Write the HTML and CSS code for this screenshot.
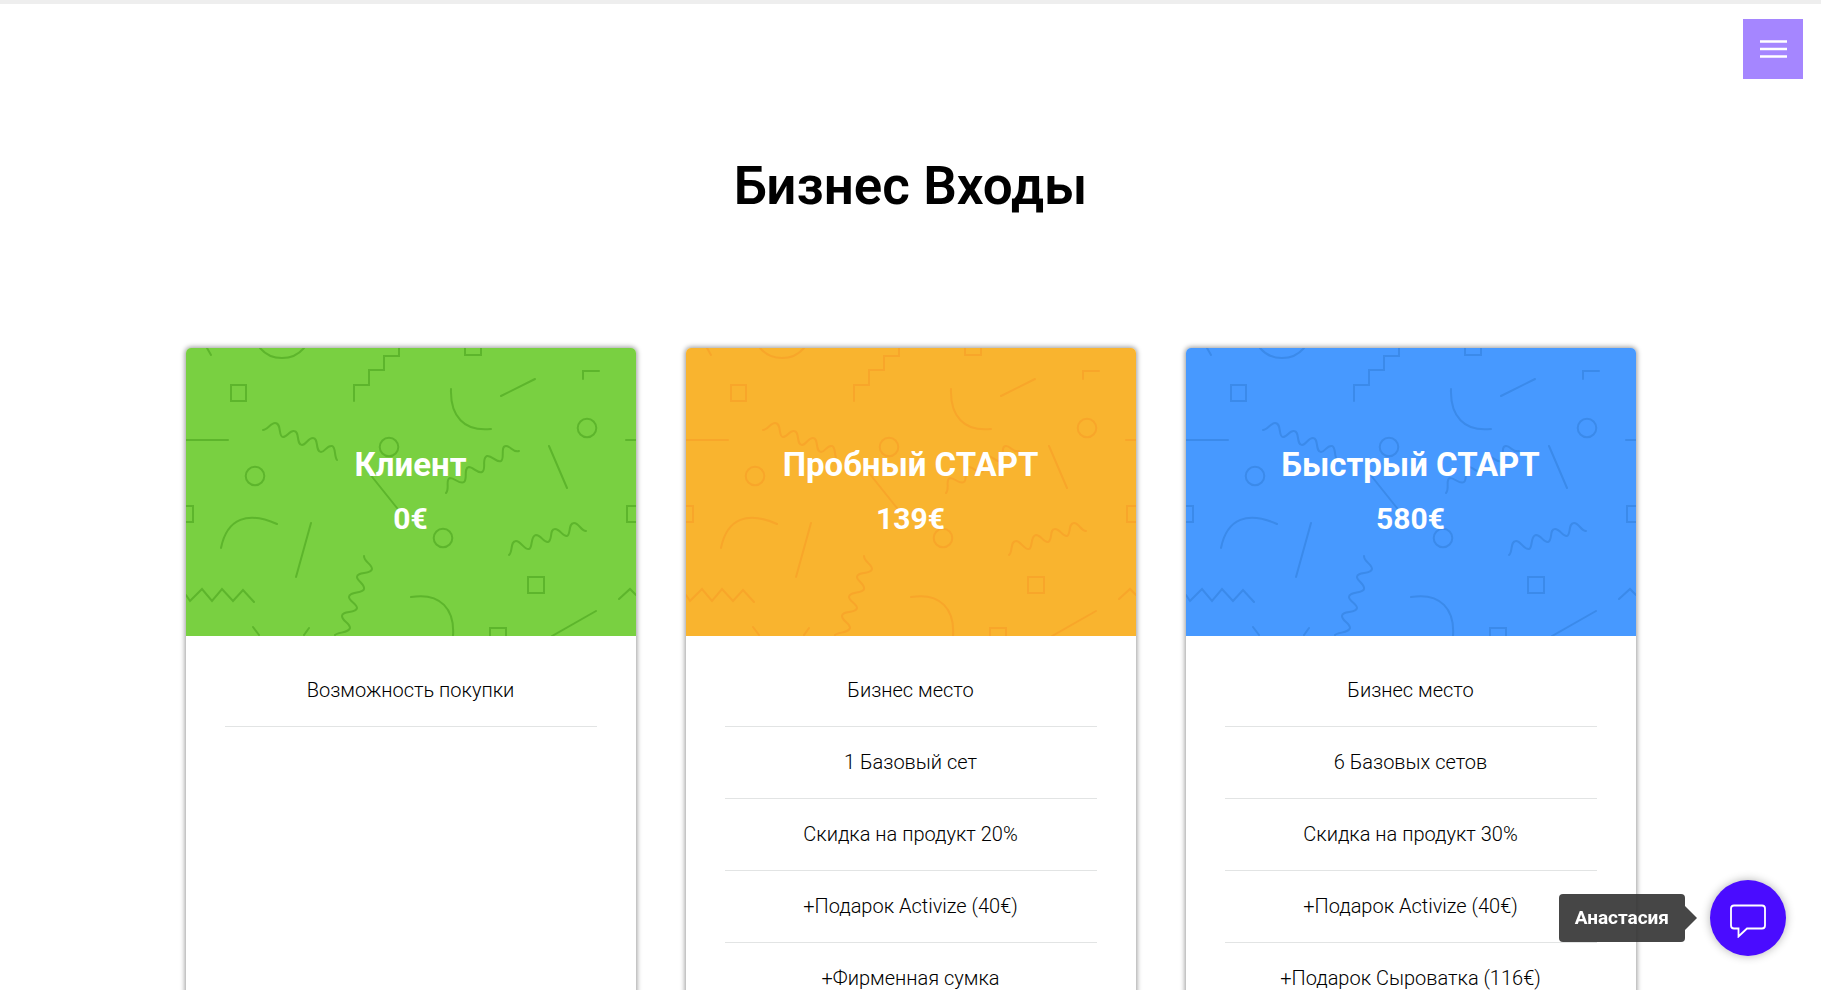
FILE: index.html
```html
<!DOCTYPE html>
<html lang="ru">
<head>
<meta charset="utf-8">
<meta name="viewport" content="width=device-width, initial-scale=1">
<title>Бизнес Входы</title>
<link rel="stylesheet" href="styles.css">
</head>
<body>
<svg class="defs" aria-hidden="true">
  <symbol id="confetti" viewBox="0 0 450 288" preserveAspectRatio="xMidYMid slice">
    <g fill="none" stroke="currentColor" stroke-width="2" stroke-linecap="round">
      <path d="M21 0L25 7M74 0A29 29 0 0 0 118 0M168 53V37H183V22H198V8H213V0M0 92H42M183 125L211 160"/>
      <path d="M45 37h15v16h-15zM-8 158H7v16H-8zM279-8h16V7h-16zM441 158h16v16h-16zM342 229h16v16h-16zM304 280h16v16h-16z"/>
      <path d="M77 82C81 82 85 75 89 75C96 75 92 89 97 89C101 89 104 82 108 83C114 83 110 97 116 97C120 97 122 90 127 90C133 90 129 104 135 104C139 104 141 97 146 98C150 99 148 108 151 112"/>
      <circle cx="69" cy="128" r="9.3"/><circle cx="203" cy="99" r="9.3"/><circle cx="401" cy="80" r="9.3"/><circle cx="257" cy="190" r="9.3"/>
      <path d="M35 200C41 170 62 163 91 176M125 175L110 229M0 247L4 253L16 241L26 253L36 241L47 253L57 242L68 254M67 279L73 287M123 280L118 287"/>
      <path d="M178 208C178 214 186 216 186 221C185 227 171 223 171 229C171 233 179 236 178 241C177 246 163 243 163 249C163 253 171 256 171 260C170 266 156 262 156 268C156 273 164 275 164 280C163 285 152 284 149 287"/>
      <path d="M315 48L349 31M265 41C264 68 278 84 305 81M397 31V23H413M440 92H450M363 98L381 140"/>
      <path d="M260 145C264 141 259 131 264 130C269 130 274 137 278 134C282 131 277 120 283 119C287 119 292 126 296 124C301 122 295 110 301 108C306 107 310 115 315 113C319 111 314 98 320 98C325 98 327 105 333 103"/>
      <path d="M323 207C327 204 324 193 330 193C335 193 338 202 343 201C347 200 344 188 350 187C355 187 358 195 362 194C367 192 363 181 369 181C374 181 377 189 381 188C385 187 382 175 388 175C393 175 395 183 400 183"/>
      <path d="M225 249C255 244 269 262 267 288M366 288L410 263M433 251L444 241L450 247"/>
    </g>
  </symbol>
</svg>

<header class="topbar">
  <button class="menu" type="button" aria-label="Меню">
    <svg class="menu-icon" viewBox="0 0 27 18" aria-hidden="true">
      <path d="M0 1.500H27M0 9H27M0 16.500H27" fill="none" stroke="#fff" stroke-width="2.600"/>
    </svg>
  </button>
</header>

<main class="page">
  <h1 class="page-title">Бизнес Входы</h1>
  <div class="plans">
    <article class="plan">
      <div class="plan-head plan-head-green">
        <svg class="pattern" aria-hidden="true"><use href="#confetti"/></svg>
        <h2 class="plan-name">Клиент</h2>
        <p class="plan-price">0€</p>
      </div>
      <ul class="features">
        <li class="feature">Возможность покупки</li>
      </ul>
    </article>
    <article class="plan">
      <div class="plan-head plan-head-orange">
        <svg class="pattern" aria-hidden="true"><use href="#confetti"/></svg>
        <h2 class="plan-name">Пробный СТАРТ</h2>
        <p class="plan-price">139€</p>
      </div>
      <ul class="features">
        <li class="feature">Бизнес место</li>
        <li class="feature">1 Базовый сет</li>
        <li class="feature">Скидка на продукт 20%</li>
        <li class="feature">+Подарок Activize (40€)</li>
        <li class="feature">+Фирменная сумка</li>
      </ul>
    </article>
    <article class="plan">
      <div class="plan-head plan-head-blue">
        <svg class="pattern" aria-hidden="true"><use href="#confetti"/></svg>
        <h2 class="plan-name">Быстрый СТАРТ</h2>
        <p class="plan-price">580€</p>
      </div>
      <ul class="features">
        <li class="feature">Бизнес место</li>
        <li class="feature">6 Базовых сетов</li>
        <li class="feature">Скидка на продукт 30%</li>
        <li class="feature">+Подарок Activize (40€)</li>
        <li class="feature">+Подарок Сыроватка (116€)</li>
      </ul>
    </article>
  </div>
</main>

<aside class="chat">
  <span class="chat-label" id="chat-label">Анастасия</span>
  <button class="chat-button" type="button" aria-labelledby="chat-label">
    <svg class="chat-icon" viewBox="0 0 36 34" aria-hidden="true">
      <path d="M4 1.500H32Q35 1.500 35 4.500V21.500Q35 24.500 32 24.500H17L8.500 32.500V24.500H4Q1 24.500 1 21.500V4.500Q1 1.500 4 1.500Z" fill="none" stroke="#fff" stroke-width="1.800"/>
    </svg>
  </button>
</aside>
</body>
</html>
```
FILE: styles.css
```css
* {
  box-sizing: border-box;
}

html {
  scrollbar-width: none;
}

body {
  margin: 0;
  background: #fff;
  color: #000;
  font-family: Roboto, "Noto Sans", sans-serif;
}

.defs {
  position: absolute;
  width: 0;
  height: 0;
}

.topbar {
  display: flex;
  justify-content: flex-end;
  height: 79px;
  padding: 15px 18px 0;
  border-top: 4px solid #eee;
}

.menu {
  display: flex;
  align-items: center;
  justify-content: center;
  width: 60px;
  height: 60px;
  padding: 0;
  border: 0;
  background: #a586ff;
  cursor: pointer;
}

.menu-icon {
  width: 27px;
  height: 18px;
}

.page {
  padding: 74px 20px 0;
}

.page-title {
  margin: 0 0 129px;
  font-size: 53px;
  font-weight: 600;
  line-height: 66px;
  text-align: center;
}

.plans {
  display: grid;
  grid-template-columns: repeat(3, 1fr);
  gap: 50px;
  max-width: 1450px;
  margin: 0 auto;
}

.plan {
  overflow: hidden;
  border-radius: 5px;
  background: #fff;
  box-shadow: 0 0 5px 1px rgba(0, 0, 0, 0.4);
}

.plan-head {
  position: relative;
  display: flex;
  flex-direction: column;
  align-items: center;
  justify-content: center;
  gap: 4px;
  min-height: 288px;
}

.plan-head-green {
  background: #79d041;
  color: #5db52c;
}

.plan-head-orange {
  background: #f9b42f;
  color: #f8a62a;
}

.plan-head-blue {
  background: #4799ff;
  color: #3b8aea;
}

.pattern {
  position: absolute;
  inset: 0;
  width: 100%;
  height: 100%;
}

.plan-name,
.plan-price {
  position: relative;
  margin: 0;
  color: #fff;
  font-weight: 700;
  line-height: 50px;
}

.plan-name {
  font-size: 33px;
}

.plan-price {
  font-size: 30px;
}

.features {
  margin: 0;
  padding: 19px 39px 40px;
  list-style: none;
}

.feature {
  padding: 21px 0;
  border-bottom: 1px solid #e2e4e4;
  font-size: 20px;
  font-weight: 300;
  line-height: 29px;
  text-align: center;
}

.chat {
  position: fixed;
  right: 35px;
  bottom: 34px;
  display: flex;
  align-items: center;
  gap: 25px;
}

.chat-label {
  position: relative;
  padding: 12px 16px;
  border-radius: 4px;
  background: rgba(50, 50, 50, 0.9);
  color: #fff;
  font-size: 19px;
  font-weight: 700;
  line-height: 24px;
}

.chat-label::after {
  content: "";
  position: absolute;
  top: 12px;
  left: 100%;
  border: 12px solid transparent;
  border-right: 0;
  border-left-color: rgba(50, 50, 50, 0.9);
}

.chat-button {
  display: flex;
  align-items: center;
  justify-content: center;
  width: 76px;
  height: 76px;
  padding: 6px 0 0;
  border: 0;
  border-radius: 50%;
  background: #4a0cff;
  box-shadow: 0 0 10px rgba(0, 0, 0, 0.3);
  cursor: pointer;
}

.chat-icon {
  width: 36px;
  height: 34px;
}
```
